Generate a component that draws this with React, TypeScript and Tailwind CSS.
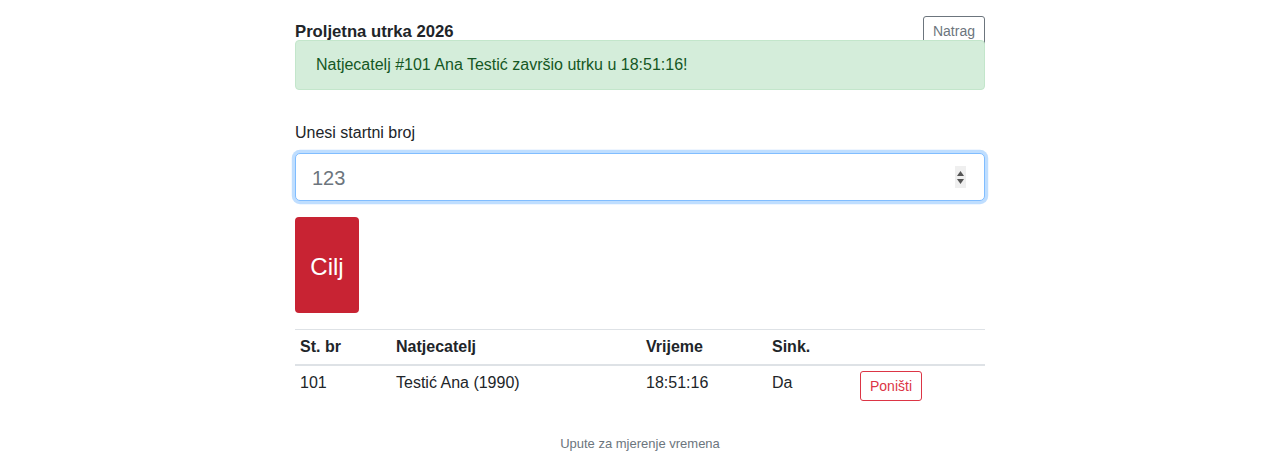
import { useState } from "react";

const FONT = '"Liberation Sans", Arial, Helvetica, sans-serif';

type Finish = {
  bib: number;
  name: string;
  time: string;
  synced: boolean;
};

const finishes: Finish[] = [
  { bib: 101, name: "Testić Ana (1990)", time: "18:51:16", synced: true },
];

export default function App() {
  const [bib, setBib] = useState("");

  return (
    <div className="min-h-[460px] bg-white text-[#212529]" style={{ fontFamily: FONT }}>
      <div className="mx-auto w-[690px] pt-[16px]">
        {/* Header */}
        <div className="flex h-[24px] items-start justify-between">
          <h1 className="mt-[4px] text-[16.7px] font-bold leading-[24px]">Proljetna utrka 2026</h1>
          <button className="h-[30px] rounded-[3px] border border-[#6c757d] bg-white px-[9px] text-[14px] leading-[21px] text-[#6c757d]">
            Natrag
          </button>
        </div>

        {/* Success alert */}
        <div className="relative h-[50px] rounded-[4px] border border-[#c3e6cb] bg-[#d4edda] px-[20px] py-[12px] text-[16px] leading-[24px] text-[#155724]">
          Natjecatelj #101 Ana Testić završio utrku u 18:51:16!
        </div>

        {/* Bib input */}
        <div className="mt-[31px]">
          <label className="mb-[8px] block text-[16px] leading-[24px]">Unesi startni broj</label>
          <div className="relative">
            <input
              type="text"
              value={bib}
              onChange={(e) => setBib(e.target.value)}
              placeholder="123"
              className="block h-[48px] w-full rounded-[5px] border border-[#80bdff] bg-white px-[16px] pt-[2px] text-[20px] text-[#495057] shadow-[0_0_0_3.2px_rgba(0,123,255,0.25)] outline-none placeholder:text-[#6c757d]"
            />
            <div className="absolute right-[19px] top-[13px] flex h-[22px] w-[11px] flex-col items-center justify-center gap-[3px] bg-[#efefef]">
              <svg width="7" height="5" viewBox="0 0 7 5">
                <path d="M3.5 0 L7 5 L0 5 Z" fill="#555" />
              </svg>
              <svg width="7" height="5" viewBox="0 0 7 5">
                <path d="M0 0 L7 0 L3.5 5 Z" fill="#555" />
              </svg>
            </div>
          </div>
        </div>

        {/* Finish button */}
        <button className="mt-[16px] block h-[96px] w-[64px] rounded-[4px] bg-[#c82333] pt-[3px] text-[24px] text-white">
          Cilj
        </button>

        {/* Results table */}
        <table className="mt-[16px] w-full table-fixed border-collapse text-left text-[16px] leading-[24px]">
          <colgroup>
            <col className="w-[96px]" />
            <col className="w-[250px]" />
            <col className="w-[126px]" />
            <col className="w-[88px]" />
            <col />
          </colgroup>
          <thead>
            <tr>
              <th className="border-b-2 border-t border-b-[#dee2e6] border-t-[#dee2e6] px-[5px] py-[5px] font-bold">St. br</th>
              <th className="border-b-2 border-t border-b-[#dee2e6] border-t-[#dee2e6] px-[5px] py-[5px] font-bold">Natjecatelj</th>
              <th className="border-b-2 border-t border-b-[#dee2e6] border-t-[#dee2e6] px-[5px] py-[5px] font-bold">Vrijeme</th>
              <th className="border-b-2 border-t border-b-[#dee2e6] border-t-[#dee2e6] px-[5px] py-[5px] font-bold">Sink.</th>
              <th className="border-b-2 border-t border-b-[#dee2e6] border-t-[#dee2e6] px-[5px] py-[5px]"></th>
            </tr>
          </thead>
          <tbody>
            {finishes.map((f) => (
              <tr key={f.bib}>
                <td className="px-[5px] py-[5px] align-top">{f.bib}</td>
                <td className="px-[5px] py-[5px] align-top">{f.name}</td>
                <td className="px-[5px] py-[5px] align-top">{f.time}</td>
                <td className="px-[5px] py-[5px] align-top">{f.synced ? "Da" : "Ne"}</td>
                <td className="px-[5px] py-[5px] align-top">
                  <button className="h-[30px] rounded-[3px] border border-[#dc3545] bg-white px-[9px] text-[14px] leading-[21px] text-[#dc3545]">
                    Poništi
                  </button>
                </td>
              </tr>
            ))}
          </tbody>
        </table>

        {/* Footer */}
        <div className="mt-[28px] text-center text-[13px] leading-[20px] text-[#6c757d]">
          Upute za mjerenje vremena
        </div>
      </div>
    </div>
  );
}
